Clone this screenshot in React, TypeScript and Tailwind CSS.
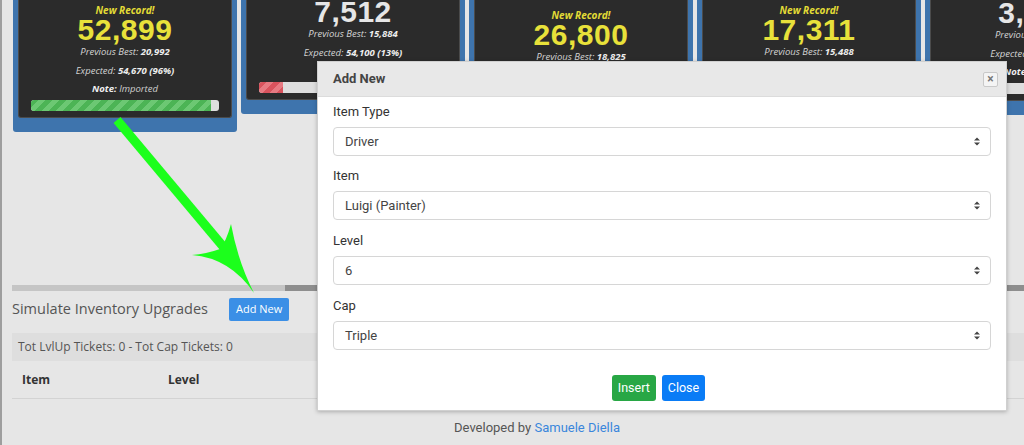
import React from 'react';

type Card = {
  record?: boolean;
  value: string;
  highlight?: boolean;
  prev: string;
  expected: string;
  note?: string;
  pct: number;
  bar: 'green' | 'red' | 'none';
  pad: string;
};

const cards: Card[] = [
  { record: true, value: '52,899', highlight: true, prev: '20,992', expected: '54,670 (96%)', note: 'Imported', pct: 96, bar: 'green', pad: 'pt-[2px]' },
  { value: '7,512', prev: '15,884', expected: '54,100 (13%)', pct: 13, bar: 'red', pad: 'pt-0' },
  { record: true, value: '26,800', highlight: true, prev: '18,825', expected: '28,400 (94%)', pct: 94, bar: 'green', pad: 'pt-[7px]' },
  { record: true, value: '17,311', highlight: true, prev: '15,488', expected: '19,050 (91%)', pct: 91, bar: 'green', pad: 'pt-[2px]' },
  { value: '3,150', prev: '9,420', expected: '41,300 (8%)', note: 'Imported', pct: 0, bar: 'none', pad: 'pt-[1px]' },
];

function ScoreCard({ c }: { c: Card }) {
  return (
    <div className="w-[224px] shrink-0 bg-[#3e74ad] px-[5px] pb-[14px] rounded-b-[3px]">
      <div
        className={`bg-[#2b2b2b] border border-[#4b4b4b] border-t-0 rounded-b-[3px] pb-[6px] text-center ${c.pad}`}
        style={{ fontFamily: '"Open Sans", sans-serif' }}
      >
        {c.record && (
          <div className="h-[16px] leading-[16px] text-[10px] font-bold italic text-[#e3dc36]">New Record!</div>
        )}
        <div
          className={`h-[24px] leading-[24px] text-[30px] font-black tracking-[0.5px] ${c.highlight ? 'text-[#e8e13a]' : 'text-[#e6e6e6]'}`}
          style={{ fontFamily: '"Liberation Sans", Arial, sans-serif' }}
        >
          {c.value}
        </div>
        <div className="h-[20px] leading-[20px] text-[9.5px] italic text-[#d4d4d4]">
          Previous Best: <span className="font-bold text-[#eeeeee]">{c.prev}</span>
        </div>
        <div className="h-[18px] leading-[18px] text-[9.5px] italic text-[#d4d4d4]">
          Expected: <span className="font-bold text-[#eeeeee]">{c.expected}</span>
        </div>
        <div className="h-[18px] leading-[18px] text-[9.5px] italic text-[#cfcfcf]">
          {c.note && (
            <>
              <span className="font-bold text-[#f0f0f0]">Note:</span> {c.note}
            </>
          )}
        </div>
        <div className="mx-[12px] mt-[2px] h-[11px] rounded-[3px] bg-[#dedede] overflow-hidden flex">
          {c.bar !== 'none' && (
            <div
              className={
                c.bar === 'green'
                  ? 'h-full bg-[repeating-linear-gradient(135deg,#4cb455_0px,#4cb455_5px,#6cc873_5px,#6cc873_10px)]'
                  : 'h-full bg-[repeating-linear-gradient(135deg,#d9535d_0px,#d9535d_5px,#e77a82_5px,#e77a82_10px)]'
              }
              style={{ width: `${c.pct}%` }}
            />
          )}
        </div>
      </div>
    </div>
  );
}

function Caret() {
  return (
    <svg width="6" height="9" viewBox="0 0 6 9" className="shrink-0">
      <path d="M0 3.6 L3 0.4 L6 3.6 Z M0 5.4 L3 8.6 L6 5.4 Z" fill="#444" />
    </svg>
  );
}

function Field({ label, value, gap }: { label: string; value: string; gap: string }) {
  return (
    <div className={gap}>
      <div className="h-[18px] leading-[18px] text-[13px] text-[#333]">{label}</div>
      <div className="mt-[6px] h-[29px] flex items-center justify-between pl-[11px] pr-[10px] border border-[#d6d6d6] rounded-[4px] bg-white text-[13px] text-[#444]">
        <span>{value}</span>
        <Caret />
      </div>
    </div>
  );
}

function AddNewModal() {
  return (
    <div
      className="absolute left-[315px] top-[61px] w-[690px] h-[350px] bg-white border border-[#d0d0d0] shadow-[0_1px_4px_rgba(0,0,0,0.25)]"
      style={{ fontFamily: 'Roboto, "Liberation Sans", sans-serif' }}
    >
      <div className="h-[35px] bg-[#e8e8e8] border-b border-[#dcdcdc] flex items-center justify-between pl-[15px] pr-[8px]">
        <span className="text-[13px] font-bold text-[#444]">Add New</span>
        <div className="w-[15px] h-[15px] flex items-center justify-center border border-[#c9c9c9] bg-[#f4f4f4] rounded-[2px] text-[12px] leading-none font-bold text-[#777]">
          ×
        </div>
      </div>
      <div className="px-[15px] pt-[6px]">
        <Field label="Item Type" value="Driver" gap="" />
        <Field label="Item" value="Luigi (Painter)" gap="mt-[11px]" />
        <Field label="Level" value="6" gap="mt-[12px]" />
        <Field label="Cap" value="Triple" gap="mt-[12px]" />
        <div className="mt-[25px] pr-[7px] flex justify-center gap-[6px]">
          <button className="h-[26px] px-[6px] rounded-[3px] bg-[#28a745] text-white text-[12.5px]">Insert</button>
          <button className="h-[26px] px-[6px] rounded-[3px] bg-[#0a7cf6] text-white text-[12.5px]">Close</button>
        </div>
      </div>
    </div>
  );
}

function GreenArrow() {
  return (
    <svg className="absolute left-0 top-0 pointer-events-none" width="320" height="300" viewBox="0 0 320 300">
      <line x1="115" y1="120" x2="224" y2="250" stroke="#1cff1c" strokeWidth="9" />
      <path
        d="M190 255 Q228 258 252 293 Q236 262 229 224 Q224 242 218 249 Q204 254 190 255 Z"
        fill="#1cff1c"
      />
    </svg>
  );
}

export default function App() {
  return (
    <div
      className="relative w-[1024px] h-[445px] overflow-hidden bg-[#e6e6e6] border-l-2 border-[#9e9e9e]"
      style={{ fontFamily: '"Open Sans", sans-serif' }}
    >
      <div className="pl-[10px]">
        {/* score cards, page scrolled so their tops are cut */}
        <div className="ml-[1px] flex items-start gap-[4px] overflow-hidden">
          {cards.map((c, i) => (
            <ScoreCard key={i} c={c} />
          ))}
        </div>

        {/* horizontal scrollbar */}
        <div className="mt-[148px] h-[6px] flex">
          <div className="w-[273px] bg-[#c5c5c5]" />
          <div className="flex-1 bg-[#8e8e8e]" />
        </div>

        <div className="h-[42px] pb-[6px] flex items-center">
          <span className="text-[14.5px] text-[#555]">Simulate Inventory Upgrades</span>
          <button className="ml-[21px] h-[23px] px-[7px] rounded-[2px] bg-[#3b8fe6] text-white text-[11px]">
            Add New
          </button>
        </div>

        <div className="h-[28px] flex items-center pl-[6px] bg-[#dedede] text-[12px] text-[#555]">
          Tot LvlUp Tickets: 0 - Tot Cap Tickets: 0
        </div>

        <div className="h-[38px] flex items-center pl-[10px] border-b border-[#d3d3d3] text-[12px] font-bold text-[#333]">
          <span className="w-[146px]">Item</span>
          <span>Level</span>
        </div>
      </div>

      <div
        className="pl-[48px] mt-[19px] text-center text-[13px] text-[#555]"
        style={{ fontFamily: 'Roboto, sans-serif' }}
      >
        Developed by <span className="text-[#3a86dc]">Samuele Diella</span>
      </div>

      <GreenArrow />
      <AddNewModal />
    </div>
  );
}
